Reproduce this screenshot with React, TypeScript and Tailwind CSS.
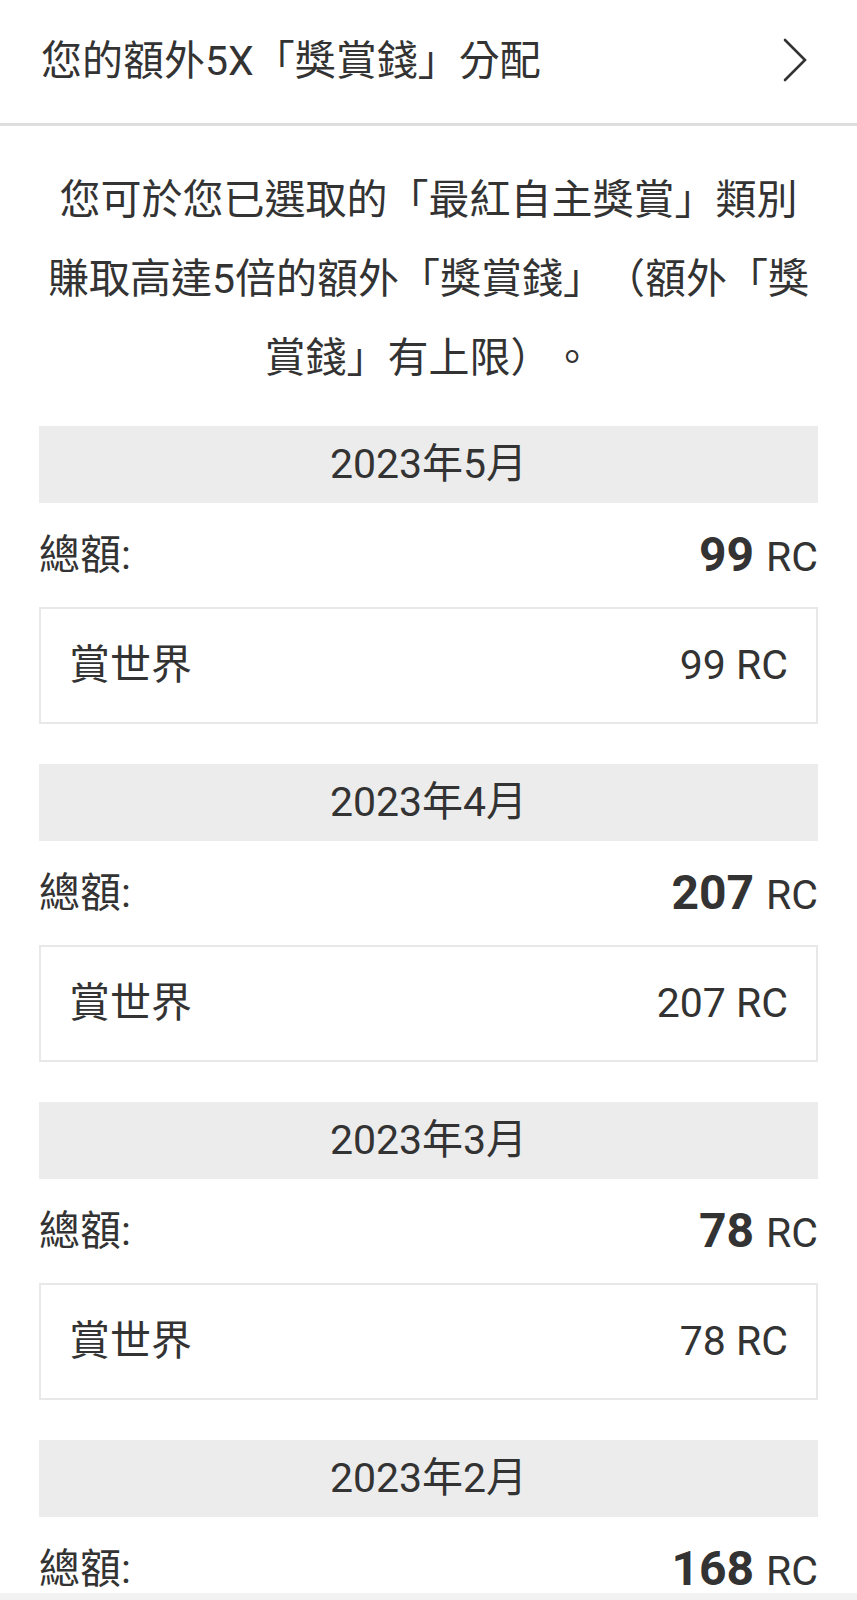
interface MonthEntry {
  month: string
  total: number
  items: { name: string; amount: number }[]
}

const months: MonthEntry[] = [
  { month: '2023年5月', total: 99, items: [{ name: '賞世界', amount: 99 }] },
  { month: '2023年4月', total: 207, items: [{ name: '賞世界', amount: 207 }] },
  { month: '2023年3月', total: 78, items: [{ name: '賞世界', amount: 78 }] },
  { month: '2023年2月', total: 168, items: [{ name: '賞世界', amount: 168 }] },
]

function MonthSection({ entry }: { entry: MonthEntry }) {
  return (
    <section className="pb-[40px]">
      {/* Month banner */}
      <div className="h-[77px] flex items-center justify-center bg-[#ececec]">
        <span className="text-[41px] leading-none">{entry.month}</span>
      </div>

      {/* Total */}
      <div className="h-[104px] flex items-center justify-between">
        <span className="text-[41px] leading-none">總額:</span>
        <span className="flex items-baseline gap-[12px] leading-none">
          <span className="text-[48px] font-bold">{entry.total}</span>
          <span className="text-[41px]">RC</span>
        </span>
      </div>

      {/* Breakdown */}
      {entry.items.map((item) => (
        <div
          key={item.name}
          className="h-[117px] border-2 border-[#e8e8e8] px-[28px] flex items-center justify-between"
        >
          <span className="text-[41px] leading-none">{item.name}</span>
          <span className="text-[41px] leading-none">{item.amount} RC</span>
        </div>
      ))}
    </section>
  )
}

export default function App() {
  return (
    <div
      lang="zh-Hant-TW"
      className="relative h-[1600px] overflow-hidden bg-white text-[#333333] font-[Roboto,'Noto_Sans_CJK_TC',sans-serif] [text-spacing-trim:space-all]"
    >
      {/* Header */}
      <header className="h-[126px] pl-[41px] pr-[49px] flex items-center justify-between border-b-[3px] border-[#dedede]">
        <h1 className="text-[41px] leading-none font-normal">您的額外5X「獎賞錢」分配</h1>
        <svg width="26" height="44" viewBox="0 0 26 44" fill="none" className="-mt-[4px]">
          <polyline
            points="3,2 23,22 3,42"
            stroke="#333333"
            strokeWidth="2.6"
            strokeLinecap="round"
            strokeLinejoin="miter"
          />
        </svg>
      </header>

      <div className="px-[39px]">
        <p className="mx-auto max-w-[770px] pt-[35px] pb-[28px] text-center text-[41px] leading-[79px]">
          您可於您已選取的「最紅自主獎賞」類別賺取高達5倍的額外「獎賞錢」（額外「獎賞錢」有上限）。
        </p>

        {months.map((m) => (
          <MonthSection key={m.month} entry={m} />
        ))}
      </div>

      {/* Bottom bar edge */}
      <div className="absolute left-0 right-0 bottom-0 h-[7px] bg-[#f2f2f2]" />
    </div>
  )
}
